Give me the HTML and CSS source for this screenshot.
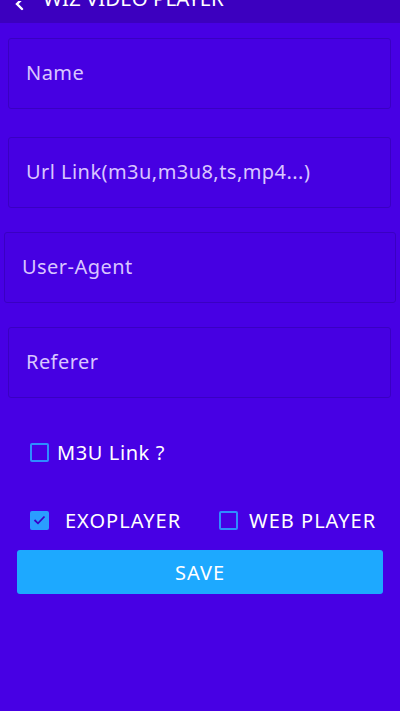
FILE: index.html
```html
<!DOCTYPE html>
<html>
<head>
<meta charset="utf-8">
<link rel="stylesheet" href="styles.css">
</head>
<body>
<header class="topbar">
  <svg class="back" width="14" height="14" viewBox="0 0 14 14"><path d="M10 -4 L3 3 L8 8" fill="none" stroke="#fff" stroke-width="2.4" stroke-linecap="round"/></svg>
  <span class="title">WIZ VIDEO PLAYER</span>
</header>
<main class="form">
  <div class="field f-name">Name</div>
  <div class="field f-url">Url Link(m3u,m3u8,ts,mp4...)</div>
  <div class="field f-ua">User-Agent</div>
  <div class="field f-ref">Referer</div>
  <div class="check-row m3u">
    <span class="box"></span><span class="label">M3U Link ?</span>
  </div>
  <div class="check-row players">
    <div class="opt exo"><span class="box checked"><svg width="13" height="10" viewBox="0 0 13 10"><path d="M1.5 5 L5 8.3 L11.5 1.5" fill="none" stroke="#3a00c8" stroke-width="1.8"/></svg></span><span class="label caps">EXOPLAYER</span></div>
    <div class="opt web"><span class="box"></span><span class="label caps">WEB PLAYER</span></div>
  </div>
  <button class="save">SAVE</button>
</main>
</body>
</html>
```
FILE: styles.css
```css
html, body {
  margin: 0;
  padding: 0;
}
body {
  background: #4700e4;
  width: 400px;
  height: 711px;
  overflow: hidden;
  font-family: "Noto Sans", "Open Sans", sans-serif;
}
.topbar {
  height: 23px;
  background: #3c00bf;
  display: flex;
  align-items: flex-end;
  overflow: hidden;
  position: relative;
}
.back {
  position: absolute;
  left: 14px;
  top: 1px;
}
.title {
  color: #fff;
  font-size: 20.5px;
  line-height: 22px;
  margin-left: 43px;
  margin-bottom: 14px;
}
.form {
  display: flex;
  flex-direction: column;
}
.field {
  box-sizing: border-box;
  height: 71px;
  border: 1px solid #3a00c2;
  border-radius: 3px;
  background: #4600e2;
  color: #d9c6ff;
  font-size: 20px;
  letter-spacing: 0.45px;
  display: flex;
  align-items: center;
  padding-left: 17px;
  padding-bottom: 3px;
}
.f-name { margin: 15px 9px 0 8px; }
.f-url { margin: 28px 9px 0 8px; }
.f-ua { margin: 24px 4px 0 4px; }
.f-ref { margin: 24px 9px 0 8px; }
.check-row {
  display: flex;
  align-items: center;
  color: #fff;
  font-size: 20px;
  letter-spacing: 0.6px;
}
.caps { letter-spacing: 1px; }
.m3u {
  margin: 42px 0 0 30px;
  height: 24px;
}
.m3u .label { margin-left: 8px; }
.players {
  margin: 44px 0 0 30px;
  height: 24px;
}
.opt {
  display: flex;
  align-items: center;
}
.exo .label { margin-left: 16px; }
.web { margin-left: 38px; }
.web .label { margin-left: 11px; }
.box {
  box-sizing: border-box;
  width: 19px;
  height: 19px;
  border: 2px solid #2e8dff;
  border-radius: 2px;
  display: flex;
  align-items: center;
  justify-content: center;
}
.box.checked {
  background: #2a9dff;
  border-color: #2a9dff;
}
.save {
  margin: 18px 17px 0 17px;
  height: 44px;
  border: none;
  border-radius: 3px;
  background: #1da9ff;
  color: #fff;
  font-family: "Noto Sans", "Open Sans", sans-serif;
  font-size: 20px;
  letter-spacing: 1px;
  padding: 0;
}
```
